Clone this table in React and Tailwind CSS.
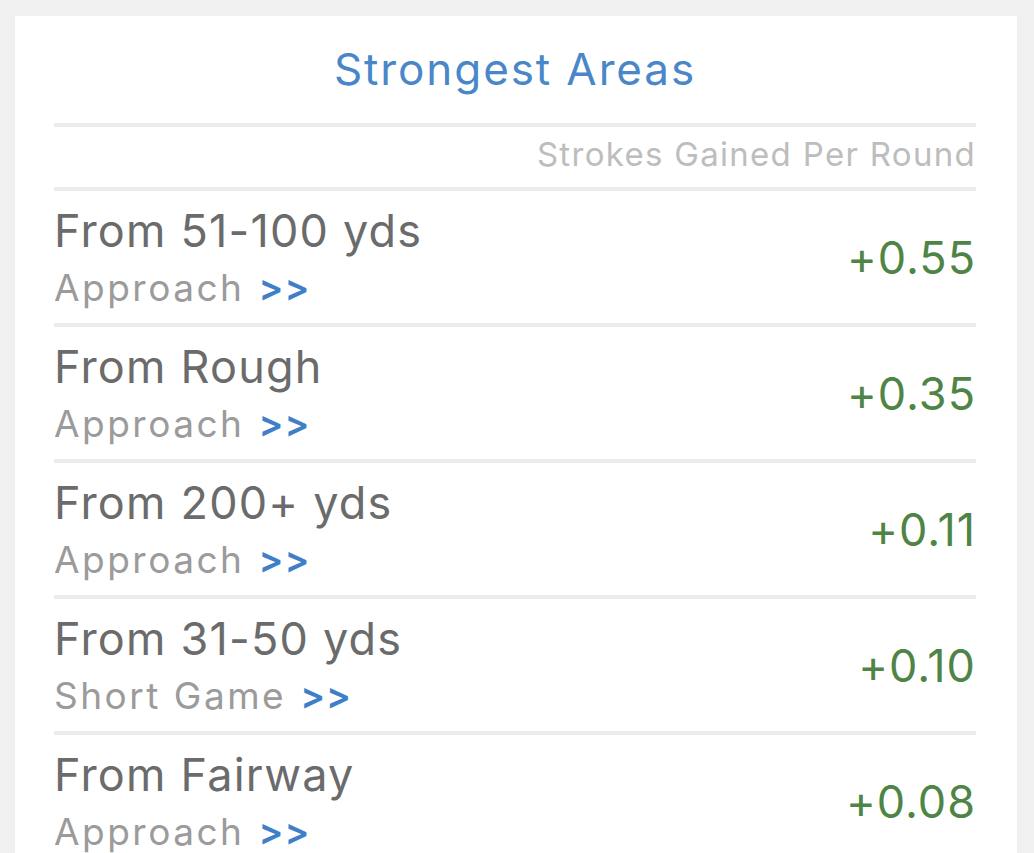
const rows = [
  { title: "From 51-100 yds", kind: "Approach", value: "+0.55" },
  { title: "From Rough", kind: "Approach", value: "+0.35" },
  { title: "From 200+ yds", kind: "Approach", value: "+0.11" },
  { title: "From 31-50 yds", kind: "Short Game", value: "+0.10" },
  { title: "From Fairway", kind: "Approach", value: "+0.08" },
];

const App = () => {
  return (
    <div
      className="h-[853px] overflow-hidden bg-[#f0f0f0] pt-[16px]"
      style={{ fontFamily: "Inter, 'Noto Sans', sans-serif" }}
    >
      <div className="ml-[15px] w-[1002px] bg-white pl-[39px] pr-[41px] pt-[25px]">
        <h1 className="text-center text-[44px] leading-[56px] text-[#4a87c9] tracking-[1.9px]">
          Strongest Areas
        </h1>

        <div className="mt-[26px] border-t-4 border-[#ececec] pt-[7px] pb-[13px]">
          <p className="text-right text-[33px] leading-[40px] text-[#bdbdbd] tracking-[1.3px]">
            Strokes Gained Per Round
          </p>
        </div>

        {rows.map((row) => (
          <div
            key={row.title}
            className="flex items-center justify-between border-t-4 border-[#ececec] pt-[14px] pb-[13px]"
          >
            <div>
              <p className="text-[45px] leading-[52px] text-[#6b6b6b] tracking-[1.2px]">
                {row.title}
              </p>
              <p className="mt-[9px] text-[37px] leading-[44px] text-[#9b9b9b] tracking-[2.5px]">
                {row.kind}
                <span className="ml-[14px] font-semibold text-[#3f7fc7] tracking-[1px]">&gt;&gt;</span>
              </p>
            </div>
            <p className="text-[45px] leading-[52px] text-[#4f8447] tracking-[1px]">{row.value}</p>
          </div>
        ))}
      </div>
    </div>
  );
};

export default App;
